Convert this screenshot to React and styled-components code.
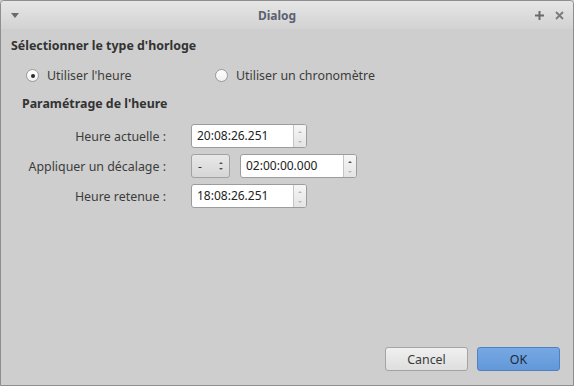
import React from 'react'
import styled, { createGlobalStyle } from 'styled-components'

const Global = createGlobalStyle`
  html, body { margin: 0; padding: 0; background: #cecece; }
  body { font-family: "Noto Sans", "Open Sans", sans-serif; font-size: 12.4px; color: #333; }
`

const Window = styled.div`
  width: 574px;
  height: 386px;
  box-sizing: border-box;
  border: 1px solid #8e8e8e;
  border-radius: 4px 4px 0 0;
  background: #cecece;
  display: flex;
  flex-direction: column;
  overflow: hidden;
`

const TitleBar = styled.div`
  height: 28px;
  flex: none;
  display: flex;
  align-items: center;
  padding: 0 9px 0 10px;
  background: linear-gradient(#e6e6e6, #d2d2d2);
`

const Title = styled.div`
  flex: 1;
  text-align: center;
  font-weight: bold;
  font-size: 12px;
  color: #5b6270;
`

const TitleIcons = styled.div`
  display: flex;
  gap: 11px;
  align-items: center;
`

const Body = styled.div`
  flex: 1;
  display: flex;
  flex-direction: column;
  padding: 8px 13px 14px 10px;
`

const Heading = styled.div`
  font-weight: bold;
  height: 17px;
  line-height: 17px;
  color: #333;
  padding-left: ${p => p.$indent || 0}px;
`

const RadioRow = styled.div`
  display: flex;
  align-items: center;
  padding-left: 15px;
  margin: 13px 0 11px;
  height: 17px;
`

const RadioItem = styled.label`
  display: flex;
  align-items: center;
  gap: 8px;
  width: ${p => p.$w || 'auto'};
  color: #3c3c3c;
`

const Radio = styled.span`
  width: 11px;
  height: 11px;
  border-radius: 50%;
  border: 1px solid #9a9a9a;
  background: linear-gradient(#ffffff, #f0f0f0);
  display: flex;
  align-items: center;
  justify-content: center;
  &::after {
    content: '';
    width: 4px;
    height: 4px;
    border-radius: 50%;
    background: ${p => (p.$checked ? '#2a2a2a' : 'transparent')};
  }
`

const Form = styled.div`
  display: grid;
  grid-template-columns: 144px auto;
  column-gap: 25px;
  row-gap: 6px;
  padding-left: 11px;
  margin-top: 12px;
  align-items: center;
`

const Label = styled.div`
  text-align: right;
  color: #3c3c3c;
`

const Fields = styled.div`
  display: flex;
  gap: 10px;
`

const Spin = styled.div`
  width: ${p => p.$w}px;
  height: 24px;
  box-sizing: border-box;
  border: 1px solid #9c9c9c;
  border-radius: 3px;
  background: #fff;
  display: flex;
  overflow: hidden;
`

const SpinText = styled.div`
  flex: 1;
  padding-left: 5px;
  line-height: 22px;
  color: #222;
  font-size: 12px;
`

const SpinButtons = styled.div`
  width: 12px;
  border-left: 1px solid #c4c4c4;
  background: linear-gradient(#f6f6f6, #e4e4e4);
  display: flex;
  flex-direction: column;
  justify-content: space-between;
  align-items: center;
  padding: 6px 0 4px;
`

const Arrow = styled.span`
  width: 0;
  height: 0;
  border-left: 2px solid transparent;
  border-right: 2px solid transparent;
  ${p => (p.$down ? 'border-top' : 'border-bottom')}: 2px solid ${p => (p.$on ? '#555' : '#b8b8b8')};
`

const Combo = styled.div`
  width: 39px;
  height: 24px;
  box-sizing: border-box;
  border: 1px solid #a2a2a2;
  border-radius: 3px;
  background: linear-gradient(#e8e8e8, #d6d6d6);
  display: flex;
  align-items: center;
  justify-content: space-between;
  padding: 0 6px 0 6px;
  font-size: 12px;
`

const ComboArrows = styled.div`
  display: flex;
  flex-direction: column;
  gap: 4px;
`

const Spacer = styled.div`
  flex: 1;
`

const ButtonRow = styled.div`
  display: flex;
  justify-content: flex-end;
  gap: 9px;
`

const Button = styled.button`
  width: 83px;
  height: 24px;
  border-radius: 3px;
  font-family: inherit;
  font-size: 12.4px;
  border: 1px solid ${p => (p.$primary ? '#4d80c4' : '#a4a4a4')};
  background: ${p => (p.$primary ? 'linear-gradient(#75a8e4, #6398d8)' : 'linear-gradient(#f0f0f0, #dedede)')};
  color: ${p => (p.$primary ? '#1e2a3a' : '#3a3a3a')};
  padding: 0;
`

const SpinBox = ({ value, w = 116, upOn, downOn }) => (
  <Spin $w={w}>
    <SpinText>{value}</SpinText>
    <SpinButtons>
      <Arrow $on={upOn} />
      <Arrow $down $on={downOn} />
    </SpinButtons>
  </Spin>
)

export default function App() {
  return (
    <>
      <Global />
      <Window>
        <TitleBar>
          <svg width="8" height="5" viewBox="0 0 8 5">
            <path d="M0 0 L8 0 L4 5 Z" fill="#6a6a6a" />
          </svg>
          <Title>Dialog</Title>
          <TitleIcons>
            <svg width="9" height="9" viewBox="0 0 9 9">
              <path d="M4.5 0 V9 M0 4.5 H9" stroke="#6a6a6a" strokeWidth="2" />
            </svg>
            <svg width="9" height="9" viewBox="0 0 9 9">
              <path d="M1 1 L8 8 M8 1 L1 8" stroke="#7a7a7a" strokeWidth="1.8" />
            </svg>
          </TitleIcons>
        </TitleBar>
        <Body>
          <Heading>Sélectionner le type d'horloge</Heading>
          <RadioRow>
            <RadioItem $w="189px">
              <Radio $checked />
              Utiliser l'heure
            </RadioItem>
            <RadioItem>
              <Radio />
              Utiliser un chronomètre
            </RadioItem>
          </RadioRow>
          <Heading $indent={11}>Paramétrage de l'heure</Heading>
          <Form>
            <Label>Heure actuelle :</Label>
            <SpinBox value="20:08:26.251" />
            <Label>Appliquer un décalage :</Label>
            <Fields>
              <Combo>
                <span>-</span>
                <ComboArrows>
                  <Arrow $on />
                  <Arrow $down $on />
                </ComboArrows>
              </Combo>
              <SpinBox value="02:00:00.000" w={117} upOn />
            </Fields>
            <Label>Heure retenue :</Label>
            <SpinBox value="18:08:26.251" />
          </Form>
          <Spacer />
          <ButtonRow>
            <Button>Cancel</Button>
            <Button $primary>OK</Button>
          </ButtonRow>
        </Body>
      </Window>
    </>
  )
}
